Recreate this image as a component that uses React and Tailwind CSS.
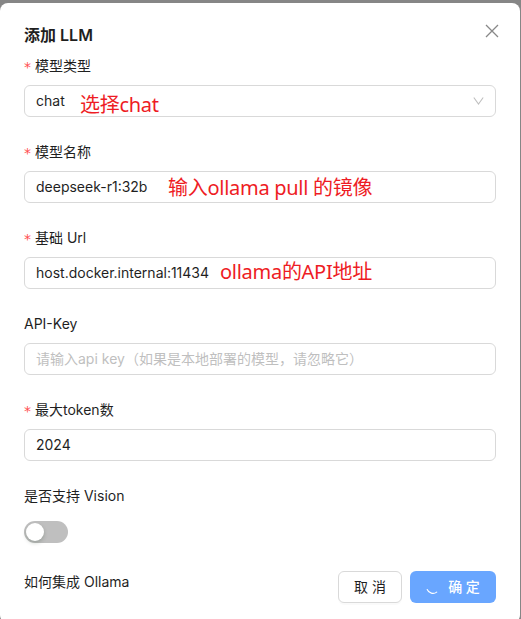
const fields = [
  { label: '模型类型', required: true, value: 'chat', select: true, note: '选择chat', notePos: 'left-[55px] top-[4px]' },
  { label: '模型名称', required: true, value: 'deepseek-r1:32b', note: '输入ollama pull 的镜像', notePos: 'left-[143px] top-px' },
  { label: '基础 Url', required: true, value: 'host.docker.internal:11434', note: 'ollama的API地址', notePos: 'left-[195px] -top-px' },
  { label: 'API-Key', placeholder: '请输入api key（如果是本地部署的模型，请忽略它）' },
  { label: '最大token数', required: true, value: '2024' },
];

const CloseIcon = () => (
  <svg width="14" height="14" viewBox="0 0 14 14" fill="none" stroke="#888888" strokeWidth="1.3">
    <path d="M1 1 13 13M13 1 1 13" />
  </svg>
);

const ArrowIcon = () => (
  <svg width="12" height="12" viewBox="0 0 12 12" fill="none" stroke="#bfbfbf" strokeWidth="1.1">
    <path d="M1.8 2.5 6.5 9 11.2 2.5" />
  </svg>
);

const LoadingIcon = () => (
  <svg width="14" height="14" viewBox="0 0 14 14" fill="none" stroke="#ffffff" strokeWidth="1.1" strokeLinecap="round">
    <path d="M1.2 9.5A6.2 6.2 0 0 0 10.7 12.1" />
  </svg>
);

const Label = ({ required, children }) => (
  <div className="mb-2 flex h-[22px] items-center">
    {required && (
      <span className="relative top-px mr-1 w-[7px] text-center font-['DejaVu_Sans',sans-serif] text-[14px] leading-none text-[#ff4d4f]">*</span>
    )}
    <span>{children}</span>
  </div>
);

const Field = ({ label, required, value, placeholder, select, note, notePos }) => (
  <div className="mb-6">
    <Label required={required}>{label}</Label>
    <div className="relative flex h-8 items-center justify-between rounded-md border border-[#d9d9d9] px-[11px]">
      {value ? <span>{value}</span> : <span className="text-[#bfbfbf]">{placeholder}</span>}
      {select && <ArrowIcon />}
      {note && (
        <span className={`absolute whitespace-nowrap font-['Noto_Sans','Noto_Sans_CJK_SC',sans-serif] text-[20px] leading-[30px] tracking-[-0.28px] text-[#ee1c24] ${notePos}`}>
          {note}
        </span>
      )}
    </div>
  </div>
);

export default function App() {
  return (
    <div className="h-[619px] w-[521px] overflow-hidden bg-[#868686] pt-[3px] font-['Inter','Noto_Sans_CJK_SC',sans-serif] text-[14px] leading-[22px] text-[#1f1f1f]">
      <div className="relative h-[620px] w-[520px] rounded-lg bg-white px-6 py-5">
        <button className="absolute right-[21px] top-[21px]" aria-label="Close">
          <CloseIcon />
        </button>
        <h1 className="mb-2 text-[16px] font-semibold leading-6">添加 LLM</h1>

        {fields.map((field) => (
          <Field key={field.label} {...field} />
        ))}

        <div className="mb-6">
          <Label>是否支持 Vision</Label>
          <div className="flex h-8 items-center pt-0.5">
            <div className="h-[22px] w-11 rounded-full bg-[#bfbfbf] p-0.5">
              <div className="size-[18px] rounded-full bg-white shadow-[0_2px_4px_rgba(0,35,11,0.2)]" />
            </div>
          </div>
        </div>

        <div className="flex items-start justify-between">
          <a>如何集成 Ollama</a>
          <div className="flex gap-2">
            <button className="h-8 w-16 rounded-md border border-[#d9d9d9] bg-white shadow-[0_2px_0_rgba(0,0,0,0.02)]">
              取 消
            </button>
            <button className="flex h-8 w-[86px] items-center justify-center gap-2 whitespace-nowrap rounded-md bg-[#69a6ff] font-medium text-white">
              <LoadingIcon />
              确 定
            </button>
          </div>
        </div>
      </div>
    </div>
  );
}
